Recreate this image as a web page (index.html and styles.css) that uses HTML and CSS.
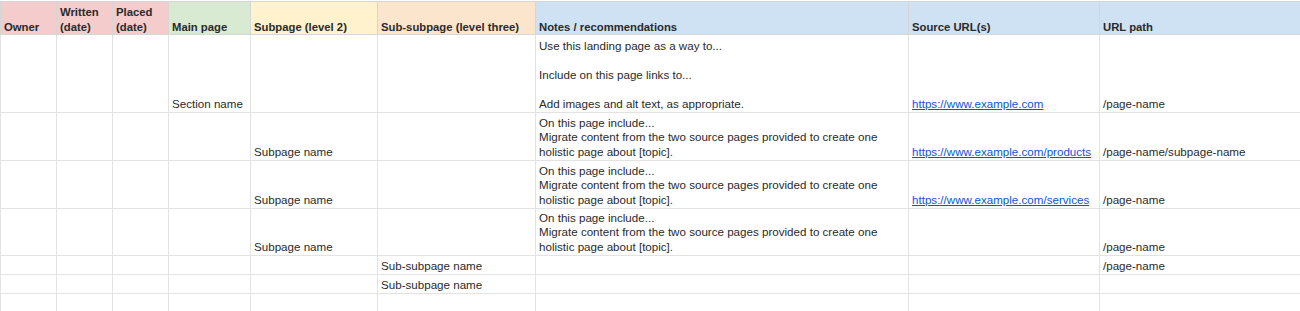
FILE: index.html
```html
<!DOCTYPE html>
<html lang="en">

<head>
    <meta charset="UTF-8">
    <meta name="viewport" content="width=device-width, initial-scale=1.0">
    <title>Site map</title>
    <link rel="stylesheet" href="styles.css">
</head>

<body>
    <table class="sheet">
        <colgroup>
            <col class="c-owner">
            <col class="c-date">
            <col class="c-date">
            <col class="c-main">
            <col class="c-sub">
            <col class="c-subsub">
            <col class="c-notes">
            <col class="c-source">
            <col class="c-path">
        </colgroup>
        <thead>
            <tr class="head">
                <th class="red">Owner</th>
                <th class="red">Written<br>(date)</th>
                <th class="red">Placed<br>(date)</th>
                <th class="green">Main page</th>
                <th class="yellow">Subpage (level 2)</th>
                <th class="orange">Sub-subpage (level three)</th>
                <th class="blue">Notes / recommendations</th>
                <th class="blue">Source URL(s)</th>
                <th class="blue">URL path</th>
            </tr>
        </thead>
        <tbody>
            <tr class="r-tall">
                <td></td>
                <td></td>
                <td></td>
                <td>Section name</td>
                <td></td>
                <td></td>
                <td>Use this landing page as a way to...<br><br>Include on this page links to...<br><br>Add images and alt text, as appropriate.</td>
                <td><a href="#">https://www.example.com</a></td>
                <td>/page-name</td>
            </tr>
            <tr class="r-mid">
                <td></td>
                <td></td>
                <td></td>
                <td></td>
                <td>Subpage name</td>
                <td></td>
                <td>On this page include...<br>Migrate content from the two source pages provided to create one holistic page about [topic].</td>
                <td><a href="#">https://www.example.com/products</a></td>
                <td>/page-name/subpage-name</td>
            </tr>
            <tr class="r-mid">
                <td></td>
                <td></td>
                <td></td>
                <td></td>
                <td>Subpage name</td>
                <td></td>
                <td>On this page include...<br>Migrate content from the two source pages provided to create one holistic page about [topic].</td>
                <td><a href="#">https://www.example.com/services</a></td>
                <td>/page-name</td>
            </tr>
            <tr class="r-mid r-short">
                <td></td>
                <td></td>
                <td></td>
                <td></td>
                <td>Subpage name</td>
                <td></td>
                <td>On this page include...<br>Migrate content from the two source pages provided to create one holistic page about [topic].</td>
                <td></td>
                <td>/page-name</td>
            </tr>
            <tr class="r-low">
                <td></td>
                <td></td>
                <td></td>
                <td></td>
                <td></td>
                <td>Sub-subpage name</td>
                <td></td>
                <td></td>
                <td>/page-name</td>
            </tr>
            <tr class="r-low">
                <td></td>
                <td></td>
                <td></td>
                <td></td>
                <td></td>
                <td>Sub-subpage name</td>
                <td></td>
                <td></td>
                <td></td>
            </tr>
            <tr class="r-low">
                <td></td>
                <td></td>
                <td></td>
                <td></td>
                <td></td>
                <td></td>
                <td></td>
                <td></td>
                <td></td>
            </tr>
        </tbody>
    </table>
</body>

</html>
```

FILE: styles.css
```css
body {
    margin: 0;
    padding-top: 1px;
    background-color: #fff;
    font-family: "Liberation Sans", Arial, sans-serif;
    font-size: 11.6px;
    color: #2a2a2a;
}

.sheet {
    width: 1300px;
    table-layout: fixed;
    border-collapse: collapse;
}

.c-owner { width: 56px; }
.c-date { width: 56px; }
.c-main { width: 82px; }
.c-sub { width: 127px; }
.c-subsub { width: 158px; }
.c-notes { width: 373px; }
.c-source { width: 191px; }
.c-path { width: 201px; }

.sheet th,
.sheet td {
    border: 1px solid #e3e3e3;
    padding: 0 3px 1px;
    vertical-align: bottom;
    text-align: left;
    line-height: 14.5px;
    white-space: nowrap;
    overflow: hidden;
}

.sheet th {
    font-weight: bold;
    font-size: 11.3px;
    height: 32px;
    border-color: #d6d6d6;
    padding-bottom: 0;
}

.sheet td:nth-child(7) {
    white-space: normal;
}

.red { background-color: #f4cccc; }
.green { background-color: #d9ead3; }
.yellow { background-color: #fff2cc; }
.orange { background-color: #fce5cd; }
.blue { background-color: #cfe2f3; }

.r-tall td { height: 76px; }
.r-mid td { height: 46px; }
.r-mid.r-short td { height: 45px; }
.r-low td { height: 17px; }

.sheet a {
    color: #1155cc;
    text-decoration: underline;
}
```
